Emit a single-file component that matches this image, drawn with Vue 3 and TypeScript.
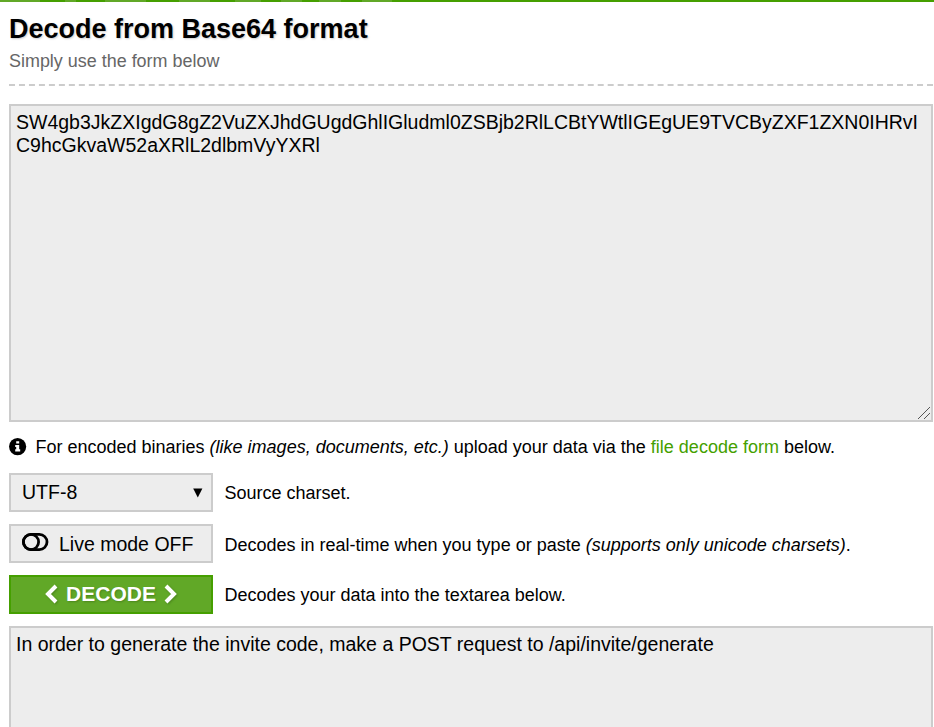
<script setup lang="ts">
import { ref } from 'vue'

const source = ref('SW4gb3JkZXIgdG8gZ2VuZXJhdGUgdGhlIGludml0ZSBjb2RlLCBtYWtlIGEgUE9TVCByZXF1ZXN0IHRvIC9hcGkvaW52aXRlL2dlbmVyYXRl')
const result = ref('In order to generate the invite code, make a POST request to /api/invite/generate')
</script>

<template>
  <main class="page">
    <div class="strip"></div>
    <header class="head">
      <h1>Decode from Base64 format</h1>
      <p>Simply use the form below</p>
    </header>
    <div class="box input">{{ source }}
      <svg class="grip" width="14" height="14" viewBox="0 0 14 14"><path d="M1 13L13 1M7 13L13 7" stroke="#555" fill="none" /></svg>
    </div>
    <p class="note">
      <svg class="info" width="18" height="18" viewBox="0 0 18 18"><circle cx="8.6" cy="8.6" r="8.6" /><path d="M7.2 3.2h3v2.4h-3zM6.2 6.9h4v4.3h1v2.2h-5v-2.2h1V9h-1z" fill="#fff" /></svg>
      <span>For encoded binaries <i>(like images, documents, etc.)</i> upload your data via the <a>file decode form</a> below.</span>
    </p>
    <div class="row r1">
      <div class="ctl select"><span>UTF-8</span><svg width="10" height="10" viewBox="0 0 10 10"><path d="M0.2 0.5h9.2L4.8 9.5z" /></svg></div>
      <span class="hint">Source charset.</span>
    </div>
    <div class="row r2">
      <div class="ctl live"><svg width="27" height="18" viewBox="0 0 27 18" fill="none" stroke="#000" stroke-width="2.8"><rect x="1.4" y="1.4" width="23.6" height="15.2" rx="7.6" /><circle cx="9" cy="9" r="7.6" /></svg><span>Live mode OFF</span></div>
      <span class="hint">Decodes in real-time when you type or paste <i>(supports only unicode charsets)</i>.</span>
    </div>
    <div class="row r3">
      <button class="ctl decode"><svg width="13" height="20" viewBox="0 0 13 20"><path d="M11 2L3 10l8 8" /></svg><span>DECODE</span><svg width="13" height="20" viewBox="0 0 13 20"><path d="M2 2l8 8-8 8" /></svg></button>
      <span class="hint">Decodes your data into the textarea below.</span>
    </div>
    <div class="box output">{{ result }}</div>
  </main>
</template>

<style>
body { margin: 0; overflow: hidden; background: #fff; }
</style>
<style scoped>
* { box-sizing: border-box; }
.page { height: 727px; overflow: hidden; font-family: "Liberation Sans", Arial, sans-serif; font-size: 18px; color: #000; }
.strip { height: 2px; background: linear-gradient(90deg, #61a827 0 40px, #459f00 40px 65px, #61a827 65px 76px, #459f00 76px 105px, #61a827 105px 146px, #459f00 146px 179px, #61a827 179px 210px, #459f00 210px 235px, #61a827 235px 261px, #459f00 261px 281px, #61a827 281px 302px, #459f00 302px 319px, #61a827 319px 341px, #459f00 341px 362px, #61a827 362px 392px, #459f00 392px); }
.head { height: 84px; margin: 0 1px 18px 9px; border-bottom: 2px dashed #ccc; }
h1 { margin: 0; padding-top: 10px; font: bold 27px/34px "Liberation Sans", Arial, sans-serif; text-shadow: 1px 1px 2px #ccc; }
.head p { margin: 3px 0 0; font-size: 17.95px; line-height: 24px; color: #666; }
.box { position: relative; margin: 0 1px 0 9px; padding: 5px 5px; border: 2px solid #ccc; background: #ededed; font-size: 19.5px; line-height: 23px; word-break: break-all; }
.input { height: 318px; }
.grip { position: absolute; right: 0; bottom: 0; }
.note { display: flex; align-items: center; gap: 8.5px; height: 24px; margin: 13px 0 14px 9px; }
a { color: #459f00; }
.row { display: flex; align-items: center; gap: 11.5px; margin-left: 9px; height: 39px; }
.hint { padding-top: 2px; }
.r2 { margin-top: 12px; }
.r2 .hint { padding-top: 4px; }
.r3 { margin: 12px 0 12px 9px; }
.ctl { display: flex; align-items: center; width: 204px; height: 39px; border: 2px solid #ccc; background: #ededed; font-size: 19.5px; }
.select { justify-content: space-between; padding: 0 8px 0 11px; }
.live { gap: 10px; padding-left: 11px; }
.live svg { margin-bottom: 3px; }
.live span { padding-top: 1px; }
.decode { justify-content: center; gap: 8.5px; padding: 0 0 2px; border-color: #459f00; background: #61a827; color: #fff; font: bold 21px "Liberation Sans", Arial, sans-serif; text-shadow: 1px 1px 2px #4b861e; }
.decode svg { filter: drop-shadow(1px 1px 1px #4b861e); }
.decode path { fill: none; stroke: #fff; stroke-width: 4; }
.output { height: 130px; }
</style>
